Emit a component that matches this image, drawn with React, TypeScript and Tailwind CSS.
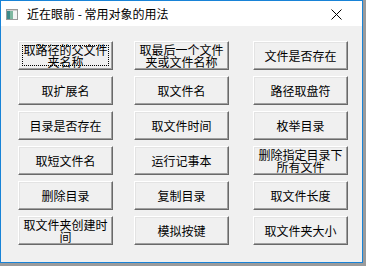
import React from "react";

const labels: string[] = [
    "取路径的父文件夹名称",
    "取最后一个文件夹或文件名称",
    "文件是否存在",
    "取扩展名",
    "取文件名",
    "路径取盘符",
    "目录是否存在",
    "取文件时间",
    "枚举目录",
    "取短文件名",
    "运行记事本",
    "删除指定目录下所有文件",
    "删除目录",
    "复制目录",
    "取文件长度",
    "取文件夹创建时间",
    "模拟按键",
    "取文件夹大小",
];

const font = { fontFamily: '"Noto Sans CJK SC", "Noto Sans", sans-serif' };

const WinButton: React.FC<{ label: string; focused?: boolean; col: number }> = ({ label, focused, col }) => {
    return (
        <button
            className={
                "relative h-[29px] w-[95px] bg-[#f0f0f0] border border-t-white border-l-white border-r-[#696969] border-b-[#696969] shadow-[inset_-1px_-1px_0_#a0a0a0,inset_1px_1px_0_#e3e3e3] flex items-center justify-center px-[2px] text-[12px] leading-[12px] text-black " +
                (col === 2 ? "ml-[3px]" : "")
            }
            style={font}
        >
            <span className="block text-center break-all">{label}</span>
            {focused && (
                <span className="absolute inset-[3px] border border-dotted border-black pointer-events-none" />
            )}
        </button>
    );
};

export default function App() {
    return (
        <div className="w-[366px] h-[266px] bg-[#9b9b9b]" style={font}>
            <div className="w-[363px] h-[263px] border border-[#1883d7] flex flex-col">
                <div className="h-[25px] bg-white flex items-center shrink-0">
                    <svg width="12" height="11" viewBox="0 0 12 11" className="ml-[5px] mt-[2px]">
                        <rect x="0.5" y="0.5" width="11" height="10" fill="#f4f4f4" stroke="#9a9a9a" />
                        <rect x="1" y="2" width="3" height="8" fill="#3d8a8a" />
                        <rect x="4" y="2" width="3" height="8" fill="#7fb7a0" />
                        <rect x="1" y="1" width="10" height="1" fill="#cfcfcf" />
                    </svg>
                    <span className="ml-[9px] text-[12px] text-black mt-[1px]">近在眼前 - 常用对象的用法</span>
                    <svg width="11" height="11" viewBox="0 0 11 11" className="ml-auto mr-[20px] mt-[2px]">
                        <path d="M0.5 0.5 L10.5 10.5 M10.5 0.5 L0.5 10.5" stroke="#000" strokeWidth="1" />
                    </svg>
                </div>
                <div className="flex-1 bg-[#f0f0f0] pl-[17px] pt-[15px]">
                    <div className="grid grid-cols-[95px_95px_98px] gap-x-[21px] gap-y-[6px]">
                        {labels.map((l, i) => (
                            <WinButton key={l} label={l} focused={i === 0} col={i % 3} />
                        ))}
                    </div>
                </div>
            </div>
        </div>
    );
}
